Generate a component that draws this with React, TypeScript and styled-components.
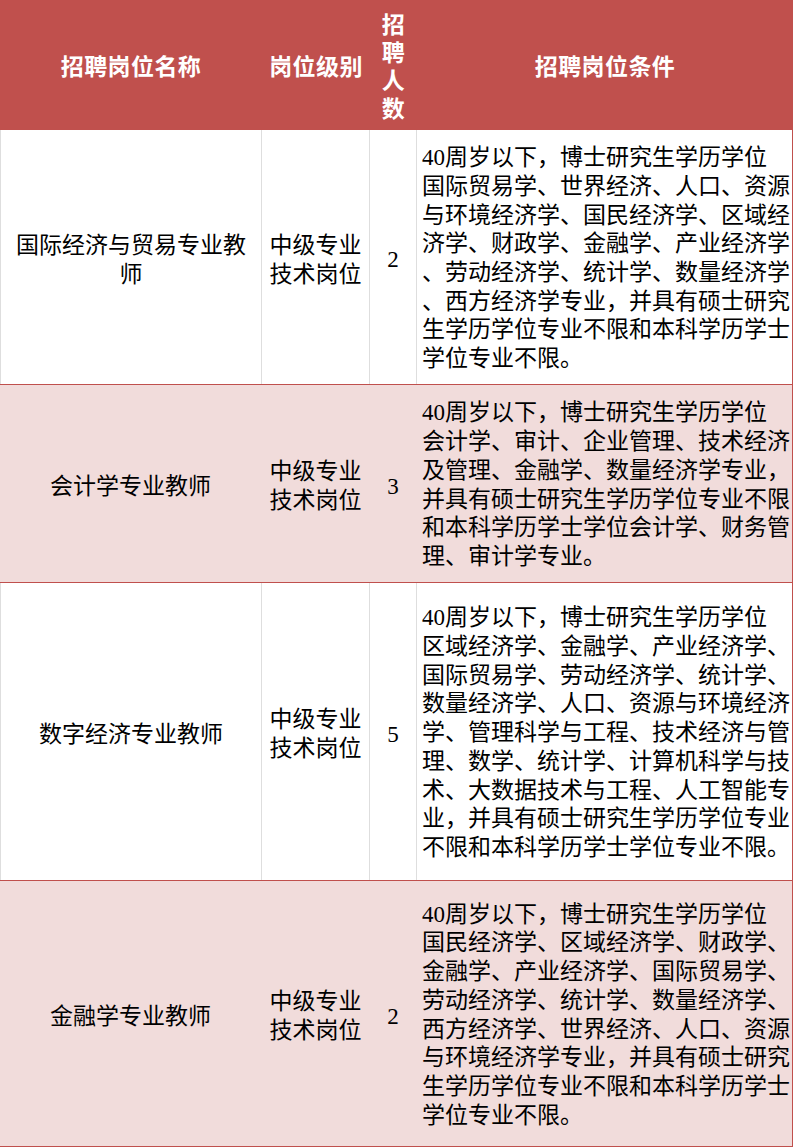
import React, { FC } from "react";
import styled, { createGlobalStyle } from "styled-components";

const GlobalStyle = createGlobalStyle`
  html, body {
    margin: 0;
    padding: 0;
    background: #ffffff;
  }
  body {
    font-family: "Liberation Serif", "Noto Sans CJK SC", serif;
  }
`;

type Shade = "white" | "pink";

type Job = {
  name: string[];
  level: string[];
  count: string;
  terms: string[];
  height: number;
  shade: Shade;
};

const jobs: Job[] = [
  {
    name: ["国际经济与贸易专业教", "师"],
    level: ["中级专业", "技术岗位"],
    count: "2",
    height: 255,
    shade: "white",
    terms: [
      "40周岁以下，博士研究生学历学位",
      "国际贸易学、世界经济、人口、资源",
      "与环境经济学、国民经济学、区域经",
      "济学、财政学、金融学、产业经济学",
      "、劳动经济学、统计学、数量经济学",
      "、西方经济学专业，并具有硕士研究",
      "生学历学位专业不限和本科学历学士",
      "学位专业不限。",
    ],
  },
  {
    name: ["会计学专业教师"],
    level: ["中级专业", "技术岗位"],
    count: "3",
    height: 198,
    shade: "pink",
    terms: [
      "40周岁以下，博士研究生学历学位",
      "会计学、审计、企业管理、技术经济",
      "及管理、金融学、数量经济学专业，",
      "并具有硕士研究生学历学位专业不限",
      "和本科学历学士学位会计学、财务管",
      "理、审计学专业。",
    ],
  },
  {
    name: ["数字经济专业教师"],
    level: ["中级专业", "技术岗位"],
    count: "5",
    height: 298,
    shade: "white",
    terms: [
      "40周岁以下，博士研究生学历学位",
      "区域经济学、金融学、产业经济学、",
      "国际贸易学、劳动经济学、统计学、",
      "数量经济学、人口、资源与环境经济",
      "学、管理科学与工程、技术经济与管",
      "理、数学、统计学、计算机科学与技",
      "术、大数据技术与工程、人工智能专",
      "业，并具有硕士研究生学历学位专业",
      "不限和本科学历学士学位专业不限。",
    ],
  },
  {
    name: ["金融学专业教师"],
    level: ["中级专业", "技术岗位"],
    count: "2",
    height: 266,
    shade: "pink",
    terms: [
      "40周岁以下，博士研究生学历学位",
      "国民经济学、区域经济学、财政学、",
      "金融学、产业经济学、国际贸易学、",
      "劳动经济学、统计学、数量经济学、",
      "西方经济学、世界经济、人口、资源",
      "与环境经济学专业，并具有硕士研究",
      "生学历学位专业不限和本科学历学士",
      "学位专业不限。",
    ],
  },
];

const RED = "#c0504d";
const PINK = "#f1dcdb";
const GRID = "#dedede";

const Table = styled.div`
  width: 793px;
  display: flex;
  flex-direction: column;
`;

const Columns = `
  display: grid;
  grid-template-columns: 262px 108px 47px 376px;
`;

const HeadRow = styled.div`
  ${Columns}
  height: 130px;
  background: ${RED};
  color: #ffffff;
  font-weight: 700;
`;

const HeadCell = styled.div`
  display: flex;
  flex-direction: column;
  align-items: center;
  justify-content: center;
  font-size: 23px;
  line-height: 28px;
  letter-spacing: 0.4px;
  padding-top: 6px;
`;

const Row = styled.div<{ $shade: Shade; $h: number }>`
  ${Columns}
  box-sizing: border-box;
  height: ${(p) => p.$h}px;
  background: ${(p) => (p.$shade === "pink" ? PINK : "#ffffff")};
  border-bottom: 1px solid ${RED};
  color: #000000;
  font-size: 23px;
  line-height: 28.7px;
`;

const Cell = styled.div<{ $shade: Shade; $last?: boolean; $first?: boolean }>`
  box-sizing: border-box;
  display: flex;
  flex-direction: column;
  justify-content: center;
  align-items: center;
  text-align: center;
  white-space: nowrap;
  padding-top: 7px;
  border-right: 1px solid
    ${(p) => (p.$last ? RED : p.$shade === "pink" ? "transparent" : GRID)};
  border-left: ${(p) =>
    p.$first && p.$shade === "white" ? `1px solid ${GRID}` : "none"};
`;

const TermsCell = styled(Cell)`
  align-items: flex-start;
  text-align: left;
  padding-left: 5px;
  padding-top: 4px;
`;

const Line = styled.span`
  display: block;
`;

const JobRow: FC<{ job: Job }> = ({ job }) => (
  <Row $shade={job.shade} $h={job.height}>
    <Cell $shade={job.shade} $first>
      {job.name.map((l) => (
        <Line key={l}>{l}</Line>
      ))}
    </Cell>
    <Cell $shade={job.shade}>
      {job.level.map((l) => (
        <Line key={l}>{l}</Line>
      ))}
    </Cell>
    <Cell $shade={job.shade}>{job.count}</Cell>
    <TermsCell $shade={job.shade} $last>
      {job.terms.map((l, i) => (
        <Line key={i}>{l}</Line>
      ))}
    </TermsCell>
  </Row>
);

export default function App() {
  return (
    <>
      <GlobalStyle />
      <Table>
        <HeadRow>
          <HeadCell>招聘岗位名称</HeadCell>
          <HeadCell>岗位级别</HeadCell>
          <HeadCell>
            <Line>招</Line>
            <Line>聘</Line>
            <Line>人</Line>
            <Line>数</Line>
          </HeadCell>
          <HeadCell>招聘岗位条件</HeadCell>
        </HeadRow>
        {jobs.map((job) => (
          <JobRow key={job.name.join("")} job={job} />
        ))}
      </Table>
    </>
  );
}
